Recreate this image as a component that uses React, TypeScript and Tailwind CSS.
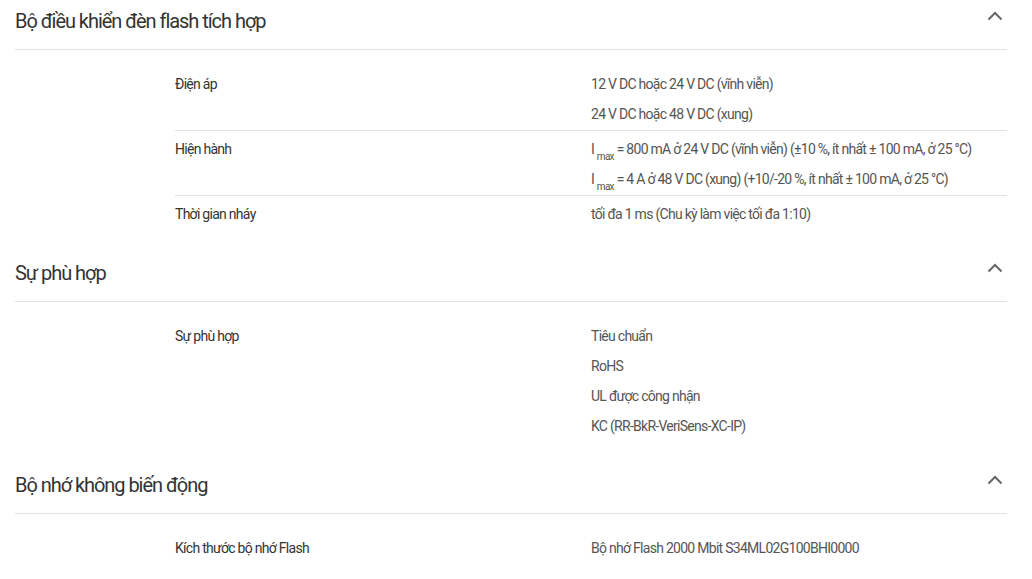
import type { ReactNode } from "react";

type Row = { label: string; values: ReactNode[] };
type Section = { title: string; rows: Row[] };

const Imax = ({ rest }: { rest: string }) => (
  <>
    I <sub className="text-[10px] leading-none align-[-3px]">max</sub> {rest}
  </>
);

const sections: Section[] = [
  {
    title: "Bộ điều khiển đèn flash tích hợp",
    rows: [
      {
        label: "Điện áp",
        values: ["12 V DC hoặc 24 V DC (vĩnh viễn)", "24 V DC hoặc 48 V DC (xung)"],
      },
      {
        label: "Hiện hành",
        values: [
          <Imax rest="= 800 mA ở 24 V DC (vĩnh viễn) (±10 %, ít nhất ± 100 mA, ở 25 °C)" />,
          <Imax rest="= 4 A ở 48 V DC (xung) (+10/-20 %, ít nhất ± 100 mA, ở 25 °C)" />,
        ],
      },
      { label: "Thời gian nháy", values: ["tối đa 1 ms (Chu kỳ làm việc tối đa 1:10)"] },
    ],
  },
  {
    title: "Sự phù hợp",
    rows: [
      {
        label: "Sự phù hợp",
        values: ["Tiêu chuẩn", "RoHS", "UL được công nhận", "KC (RR-BkR-VeriSens-XC-IP)"],
      },
    ],
  },
  {
    title: "Bộ nhớ không biến động",
    rows: [
      { label: "Kích thước bộ nhớ Flash", values: ["Bộ nhớ Flash 2000 Mbit S34ML02G100BHI0000"] },
    ],
  },
];

const Chevron = () => (
  <svg width="16" height="10" viewBox="0 0 16 10" fill="none">
    <polyline points="1.5,8.5 8,2 14.5,8.5" stroke="#666" strokeWidth="2" />
  </svg>
);

export default function App() {
  return (
    <div className="min-h-screen bg-white pl-[15px] pr-[25px] font-['Roboto',sans-serif]">
      {sections.map((section, i) => (
        <div key={i} className="mb-[22px]">
          {/* Section header */}
          <div className="flex items-center justify-between pt-[7px] pb-[14px] border-b border-[#e2e2e2]">
            <h2 className="text-[20px] leading-[28px] text-[#333] tracking-[-1.05px]">{section.title}</h2>
            <div className="pr-[4px] -mt-[10px]">
              <Chevron />
            </div>
          </div>

          {/* Spec rows */}
          <div className="pl-[160px] pt-[15px]">
            {section.rows.map((row, j) => (
              <div
                key={j}
                className={`flex text-[14px] leading-[30px] tracking-[-0.72px] pb-[1px] ${
                  j === 0 ? "pt-[4px]" : "pt-[3px] border-t border-[#e2e2e2]"
                }`}
              >
                <div className="w-[416px] shrink-0 text-[#333]">{row.label}</div>
                <div className="flex-1 text-[#555]">
                  {row.values.map((v, k) => (
                    <div key={k}>{v}</div>
                  ))}
                </div>
              </div>
            ))}
          </div>
        </div>
      ))}
    </div>
  );
}
